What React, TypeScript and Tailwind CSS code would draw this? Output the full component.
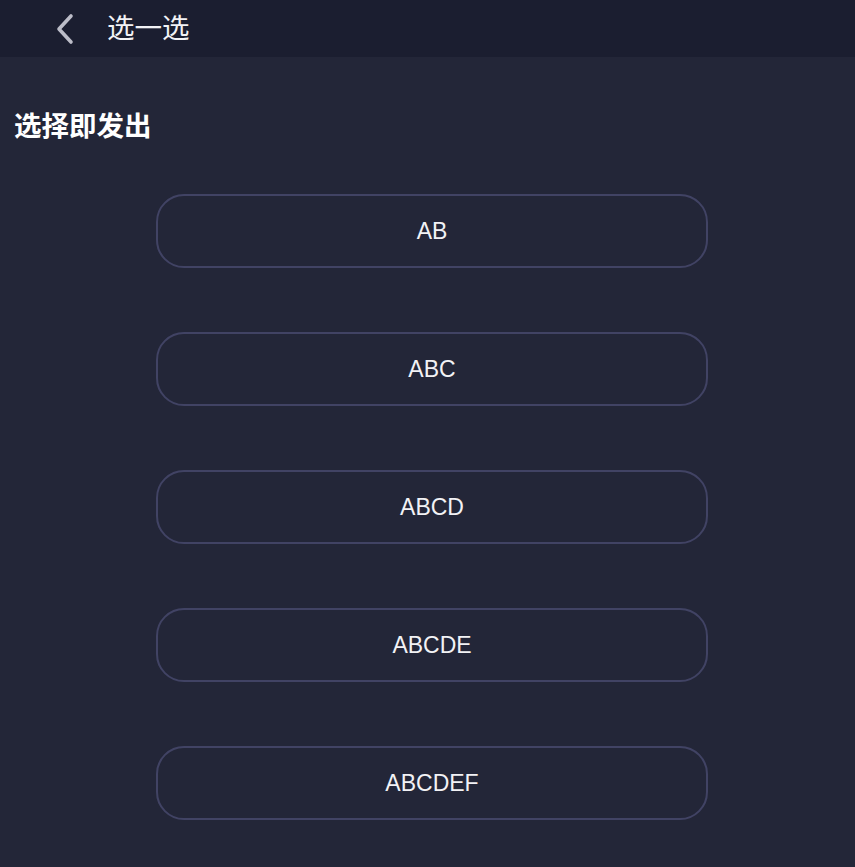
const options = ["AB", "ABC", "ABCD", "ABCDE", "ABCDEF"];

function BackIcon() {
  return (
    <svg width="22" height="34" viewBox="0 0 22 34" fill="none">
      <path d="M17 4 L5 17 L17 30" stroke="#bcbdc8" strokeWidth="3.6" strokeLinecap="round" strokeLinejoin="round" />
    </svg>
  );
}

export default function App() {
  return (
    <div className="min-h-[867px] w-full bg-[#232638] font-['Liberation_Sans','Noto_Sans_CJK_SC',sans-serif] text-white">
      {/* Top bar */}
      <div className="flex h-[57px] items-center bg-[#1b1e30] pl-[54px]">
        <BackIcon />
        <span className="ml-[31px] text-[27.5px] leading-none text-[#f2f2f5]">选一选</span>
      </div>

      {/* Section title */}
      <div className="px-[14px] pt-[55px] text-[27.5px] font-bold leading-[30px]">选择即发出</div>

      {/* Options */}
      <div className="mt-[52px] flex flex-col items-center gap-[64px] pl-[9px]">
        {options.map((o) => (
          <button
            key={o}
            className="flex h-[74px] w-[552px] items-center justify-center rounded-[28px] border-2 border-[#414364] text-[23px] text-[#f2f2f5]"
          >
            {o}
          </button>
        ))}
      </div>
    </div>
  );
}
